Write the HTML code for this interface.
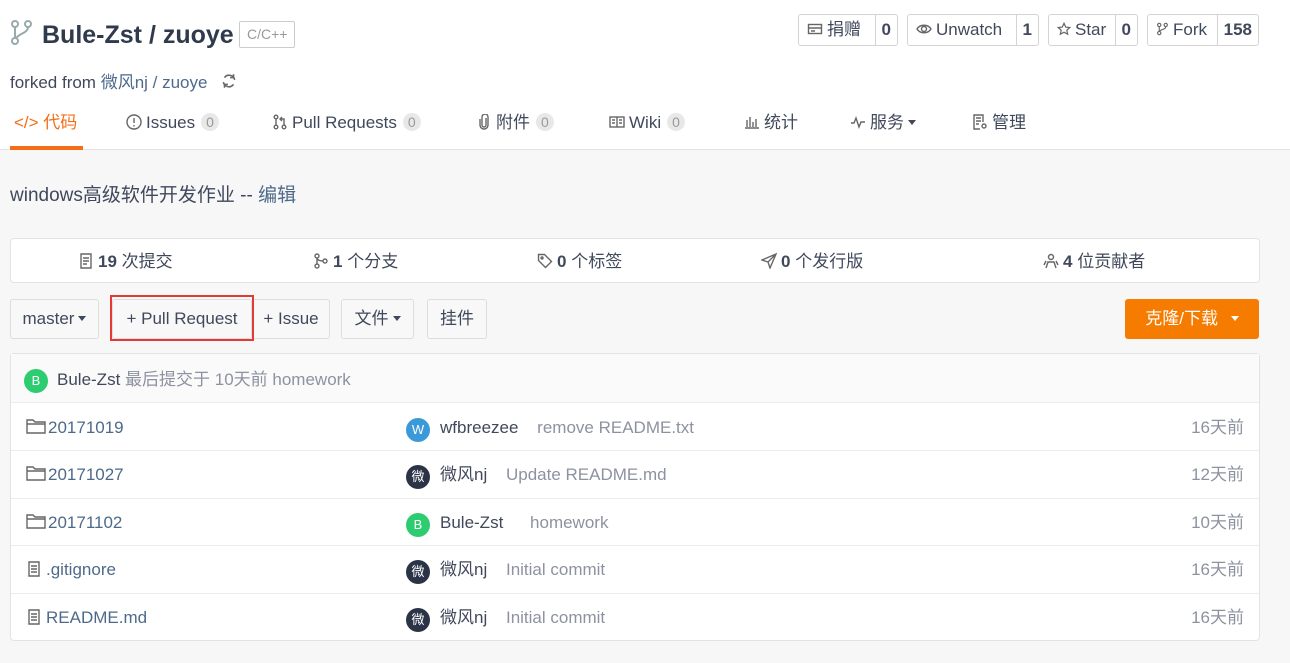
<!DOCTYPE html>
<html><head><meta charset="utf-8"><style>
*{box-sizing:border-box;margin:0;padding:0}
body{width:1290px;height:663px;overflow:hidden;background:#f7f7f8;font-family:"Liberation Sans","Noto Sans CJK SC",sans-serif;color:#40485b;font-size:17px;position:relative}
.a{position:absolute;white-space:nowrap;line-height:22px}
svg.i{display:inline-block;width:16px;height:16px;vertical-align:-2px;fill:none;stroke:#666;stroke-width:1.4;margin-right:4px}
.top{position:absolute;left:0;top:0;width:1290px;height:150px;background:#fff;border-bottom:1px solid #e3e3e3}
.btn{position:absolute;top:14px;height:32px;border:1px solid #d4d4d5;border-radius:3px;background:#fff;display:flex;font-size:17px;line-height:30px;white-space:nowrap}
.btn span{padding:0 8px;flex:1}
.btn b{border-left:1px solid #d4d4d5;padding:0 6px;font-weight:bold}
.badge{display:inline-block;background:#e8e8e8;color:#999;border-radius:9px;font-size:14px;padding:0 5px;line-height:18px;margin-left:6px;vertical-align:1px}
.panel{position:absolute;background:#fff;border:1px solid #e3e3e3;border-radius:4px}
.b2{position:absolute;top:299px;height:40px;border:1px solid #ddd;border-radius:3px;background:#f8f8f8;font-size:17px;line-height:38px;text-align:center;white-space:nowrap}
.row{position:absolute;left:11px;width:1248px;height:48px;border-top:1px solid #ececec}
.av{position:absolute;width:24px;height:24px;border-radius:12px;color:#fff;font-size:13px;text-align:center;line-height:24px}
.dk{background:#2b3346}.gr{background:#2ecc71}.bl{background:#3a9ad9}
.gray{color:#8c92a0}
.car{display:inline-block;width:0;height:0;border-left:4px solid transparent;border-right:4px solid transparent;border-top:5px solid currentColor;vertical-align:3px;margin-left:4px}
</style></head><body>
<div class="top"></div>
<svg class="a" style="left:10px;top:20px" width="24" height="26" viewBox="0 0 24 26" fill="none" stroke="#9aa" stroke-width="2"><circle cx="5" cy="4" r="3"/><circle cx="18" cy="4" r="3"/><circle cx="5" cy="21" r="3"/><path d="M5 7v11M18 7c0 6-8 6-12 11"/></svg>
<div class="a" style="left:42px;top:20px;font-size:25px;line-height:30px;font-weight:bold;color:#2f3a4c">Bule-Zst / zuoye</div>
<div class="a" style="left:239px;top:21px;height:27px;border:1px solid #ccc;border-radius:2px;color:#999;font-size:14px;line-height:25px;padding:0 7px">C/C++</div>
<div class="a" style="left:10px;top:72px;font-size:17px">forked from <span style="color:#4e6a8a">微风nj / zuoye</span> <svg class="i" style="width:18px;height:18px;margin-left:8px" viewBox="0 0 16 16"><path d="M3 9a5 5 0 0 0 9 2M13 7a5 5 0 0 0-9-2"/><path d="M12 2v3h-3M4 14v-3h3"/></svg></div>

<div class="btn" style="left:798px;width:100px"><span><svg class="i" viewBox="0 0 16 16"><rect x="1.5" y="3.5" width="13" height="9"/><path d="M1.5 7h13M4 10h4"/></svg>捐赠</span><b>0</b></div>
<div class="btn" style="left:907px;width:132px"><span><svg class="i" viewBox="0 0 16 16"><path d="M1 8c3-5 11-5 14 0c-3 5-11 5-14 0z"/><circle cx="8" cy="8" r="2.5"/></svg>Unwatch</span><b>1</b></div>
<div class="btn" style="left:1048px;width:90px"><span><svg class="i" style="width:14px" viewBox="0 0 16 16"><path d="M8 1.5l2 4.3 4.6.5-3.4 3.1 1 4.6L8 11.7 3.8 14l1-4.6L1.4 6.3 6 5.8z"/></svg>Star</span><b>0</b></div>
<div class="btn" style="left:1147px;width:112px"><span><svg class="i" style="width:13px" viewBox="0 0 16 16"><circle cx="4" cy="3" r="2"/><circle cx="12" cy="3" r="2"/><circle cx="4" cy="13" r="2"/><path d="M4 5v6M12 5c0 4-6 3-8 6"/></svg>Fork</span><b>158</b></div>

<div class="a" style="left:14px;top:112px;color:#f36e16">&lt;/&gt; 代码</div>
<div class="a" style="left:10px;top:146px;width:73px;height:4px;background:#f36e16"></div>
<div class="a" style="left:126px;top:112px"><svg class="i" viewBox="0 0 16 16"><circle cx="8" cy="8" r="7"/><path d="M8 4v5M8 11v1.5"/></svg>Issues<span class="badge">0</span></div>
<div class="a" style="left:272px;top:112px"><svg class="i" viewBox="0 0 16 16"><circle cx="4" cy="3" r="1.8"/><circle cx="4" cy="13" r="1.8"/><circle cx="12" cy="13" r="1.8"/><path d="M4 5v6M12 11V5H8M10 3L8 5l2 2"/></svg>Pull Requests<span class="badge">0</span></div>
<div class="a" style="left:476px;top:112px"><svg class="i" viewBox="0 0 16 16"><path d="M10 4v7a2 2 0 0 1-4 0V3a3 3 0 0 1 6 0v8a4 4 0 0 1-8 0V5"/></svg>附件<span class="badge">0</span></div>
<div class="a" style="left:609px;top:112px"><svg class="i" viewBox="0 0 16 16"><rect x="1" y="3" width="14" height="10"/><path d="M8 3v10M3 6h3M3 9h3M10 6h3M10 9h3"/></svg>Wiki<span class="badge">0</span></div>
<div class="a" style="left:744px;top:112px"><svg class="i" viewBox="0 0 16 16"><path d="M1 14h14M3 13V6M6 13V3M9 13V8M12 13V5"/></svg>统计</div>
<div class="a" style="left:850px;top:112px"><svg class="i" viewBox="0 0 16 16"><path d="M1 9h3l2-5 3 9 2-5h4"/></svg>服务<span class="car"></span></div>
<div class="a" style="left:972px;top:112px"><svg class="i" viewBox="0 0 16 16"><path d="M11 8V1H2v14h6M4 4h5M4 7h5M4 10h3"/><circle cx="12" cy="12" r="2"/></svg>管理</div>

<div class="a" style="left:10px;top:185px;font-size:19px">windows高级软件开发作业 -- <span style="color:#4e6a8a">编辑</span></div>

<div class="panel" style="left:10px;top:238px;width:1250px;height:45px"></div>
<div class="a" style="left:78px;top:251px"><svg class="i" viewBox="0 0 16 16"><path d="M3 1h10v14H3zM5 5h6M5 8h6M5 11h4"/></svg><b>19</b> 次提交</div>
<div class="a" style="left:313px;top:251px"><svg class="i" viewBox="0 0 16 16"><circle cx="4" cy="3" r="2"/><circle cx="12" cy="8" r="2"/><circle cx="4" cy="13" r="2"/><path d="M4 5v6M10 8c-3 0-6-1-6-3"/></svg><b>1</b> 个分支</div>
<div class="a" style="left:537px;top:251px"><svg class="i" viewBox="0 0 16 16"><path d="M1.5 1.5h6l7 7-6 6-7-7z"/><circle cx="5" cy="5" r="1"/></svg><b>0</b> 个标签</div>
<div class="a" style="left:761px;top:251px"><svg class="i" viewBox="0 0 16 16"><path d="M15 1L1 7l6 2 2 6z M15 1L7 9"/></svg><b>0</b> 个发行版</div>
<div class="a" style="left:1043px;top:251px"><svg class="i" viewBox="0 0 16 16"><circle cx="8" cy="4" r="2.5"/><path d="M3 15l2-6h6l2 6M1 12l2-4M15 12l-2-4"/></svg><b>4</b> 位贡献者</div>

<div class="b2" style="left:10px;width:89px">master<span class="car"></span></div>
<div class="b2" style="left:112px;width:140px">+ Pull Request</div>
<div class="b2" style="left:252px;width:78px">+ Issue</div>
<div class="b2" style="left:341px;width:73px">文件<span class="car"></span></div>
<div class="b2" style="left:427px;width:60px">挂件</div>
<div class="a" style="left:110px;top:295px;width:144px;height:46px;border:2px solid #e53935"></div>
<div class="b2" style="left:1125px;width:134px;background:#f57c00;border-color:#f57c00;color:#fff">克隆/下载 <span class="car" style="margin-left:8px"></span></div>

<div class="panel" style="left:10px;top:353px;width:1250px;height:288px"></div>
<div class="a" style="left:11px;top:354px;width:1248px;height:48px;background:#fafafa"></div>
<div class="av gr" style="left:24px;top:369px">B</div>
<div class="a" style="left:57px;top:369px">Bule-Zst <span class="gray">最后提交于 10天前 homework</span></div>

<div class="row" style="top:402px"></div>
<div class="row" style="top:450px"></div>
<div class="row" style="top:498px"></div>
<div class="row" style="top:545px"></div>
<div class="row" style="top:593px"></div>

<div class="a" style="left:26px;top:417px;color:#4e6a8a"><svg class="i" style="width:20px;height:18px;margin-right:2px" viewBox="0 0 20 16"><path d="M1 2h6l2 2h10v11H1z M1 6h18"/></svg>20171019</div>
<div class="a" style="left:26px;top:464px;color:#4e6a8a"><svg class="i" style="width:20px;height:18px;margin-right:2px" viewBox="0 0 20 16"><path d="M1 2h6l2 2h10v11H1z M1 6h18"/></svg>20171027</div>
<div class="a" style="left:26px;top:512px;color:#4e6a8a"><svg class="i" style="width:20px;height:18px;margin-right:2px" viewBox="0 0 20 16"><path d="M1 2h6l2 2h10v11H1z M1 6h18"/></svg>20171102</div>
<div class="a" style="left:26px;top:559px;color:#4e6a8a"><svg class="i" viewBox="0 0 16 16"><path d="M3 1h10v14H3zM5 5h6M5 8h6M5 11h6"/></svg>.gitignore</div>
<div class="a" style="left:26px;top:607px;color:#4e6a8a"><svg class="i" viewBox="0 0 16 16"><path d="M3 1h10v14H3zM5 5h6M5 8h6M5 11h6"/></svg>README.md</div>

<div class="av bl" style="left:406px;top:418px">W</div><div class="a" style="left:440px;top:417px">wfbreezee <span class="gray" style="margin-left:14px">remove README.txt</span></div>
<div class="av dk" style="left:406px;top:465px">微</div><div class="a" style="left:440px;top:464px">微风nj <span class="gray" style="margin-left:14px">Update README.md</span></div>
<div class="av gr" style="left:406px;top:513px">B</div><div class="a" style="left:440px;top:512px">Bule-Zst <span class="gray" style="margin-left:22px">homework</span></div>
<div class="av dk" style="left:406px;top:560px">微</div><div class="a" style="left:440px;top:559px">微风nj <span class="gray" style="margin-left:14px">Initial commit</span></div>
<div class="av dk" style="left:406px;top:608px">微</div><div class="a" style="left:440px;top:607px">微风nj <span class="gray" style="margin-left:14px">Initial commit</span></div>

<div class="a gray" style="right:46px;top:417px">16天前</div>
<div class="a gray" style="right:46px;top:464px">12天前</div>
<div class="a gray" style="right:46px;top:512px">10天前</div>
<div class="a gray" style="right:46px;top:559px">16天前</div>
<div class="a gray" style="right:46px;top:607px">16天前</div>
</body></html>
